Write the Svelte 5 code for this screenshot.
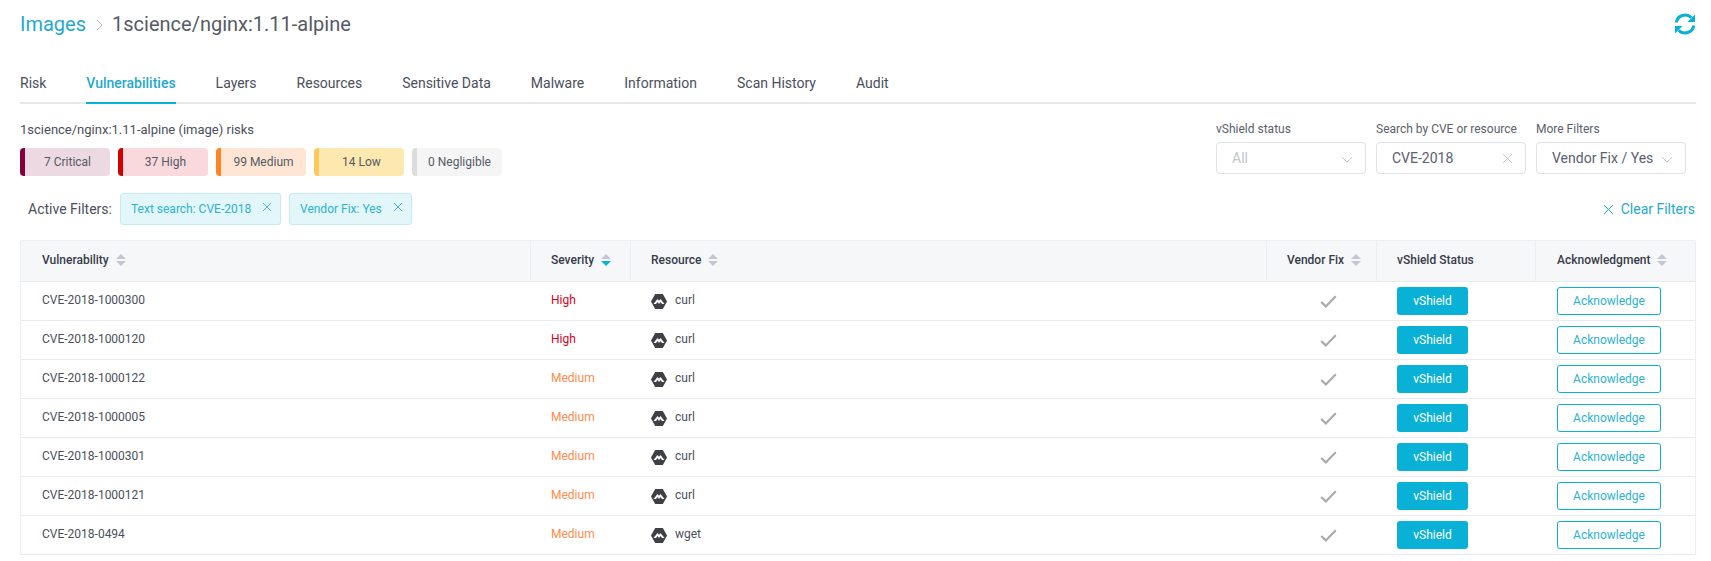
<script>
  const tabs = ['Risk','Vulnerabilities','Layers','Resources','Sensitive Data','Malware','Information','Scan History','Audit'];
  const risks = [
    {t:'7 Critical',c:'crit'},{t:'37 High',c:'high'},{t:'99 Medium',c:'med'},{t:'14 Low',c:'low'},{t:'0 Negligible',c:'neg'}
  ];
  const rows = [
    ['CVE-2018-1000300','High','curl'],
    ['CVE-2018-1000120','High','curl'],
    ['CVE-2018-1000122','Medium','curl'],
    ['CVE-2018-1000005','Medium','curl'],
    ['CVE-2018-1000301','Medium','curl'],
    ['CVE-2018-1000121','Medium','curl'],
    ['CVE-2018-0494','Medium','wget']
  ];
</script>

{#snippet sort(active)}
  <svg class="sort" width="10" height="12" viewBox="0 0 10 12"><path d="M5 0l5 5H0z" fill="#c4c7d0"/><path d="M5 12l5-5H0z" fill={active ? '#08b1d5' : '#c4c7d0'}/></svg>
{/snippet}
{#snippet x(size)}
  <svg class="x" width={size} height={size} viewBox="0 0 11 11"><path d="M1 1l9 9M10 1l-9 9" stroke="currentColor" stroke-width="1" fill="none"/></svg>
{/snippet}
{#snippet chev()}
  <svg class="chev" width="12" height="7" viewBox="0 0 12 7"><path d="M1 1l5 5 5-5" stroke="#c4c7d0" stroke-width="1" fill="none"/></svg>
{/snippet}

<div class="page">
  <header class="top">
    <div class="crumbs">
      <span class="link">Images</span>
      <svg class="sep" width="7" height="12" viewBox="0 0 7 12"><path d="M1 1l5 5-5 5" stroke="#bfc2c9" stroke-width="1" fill="none"/></svg>
      <span class="name">1science/nginx:1.11-alpine</span>
    </div>
    <svg class="refresh" width="22" height="22" viewBox="0 0 22 22" fill="none">
      <path d="M2.2 9.6A9 9 0 0 1 17.4 4.6" stroke="#08b1d5" stroke-width="3"/>
      <path d="M21 1.5v7.5h-7.5z" fill="#08b1d5"/>
      <path d="M19.8 12.4A9 9 0 0 1 4.6 17.4" stroke="#08b1d5" stroke-width="3"/>
      <path d="M1 20.5V13h7.5z" fill="#08b1d5"/>
    </svg>
  </header>

  <nav class="tabs">
    {#each tabs as t, i}
      <span class="tab" class:active={i === 1}>{t}</span>
    {/each}
  </nav>

  <section class="controls">
    <div>
      <div class="risk-title">1science/nginx:1.11-alpine (image) risks</div>
      <div class="risks">
        {#each risks as r}<span class="risk {r.c}">{r.t}</span>{/each}
      </div>
    </div>
    <div class="filters">
      <div class="field">
        <span class="lbl">vShield status</span>
        <div class="box"><span class="ph">All</span>{@render chev()}</div>
      </div>
      <div class="field">
        <span class="lbl">Search by CVE or resource</span>
        <div class="box"><span>CVE-2018</span><span class="bx">{@render x(11)}</span></div>
      </div>
      <div class="field">
        <span class="lbl">More Filters</span>
        <div class="box"><span>Vendor Fix / Yes</span>{@render chev()}</div>
      </div>
    </div>
  </section>

  <section class="active-row">
    <span class="af">Active Filters:</span>
    <span class="chip c1">Text search: CVE-2018 {@render x(10)}</span>
    <span class="chip c2">Vendor Fix: Yes {@render x(10)}</span>
    <span class="clear">{@render x(11)} Clear Filters</span>
  </section>

  <div class="table">
    <div class="row head">
      <div class="cell">Vulnerability {@render sort(false)}</div>
      <div class="cell">Severity {@render sort(true)}</div>
      <div class="cell">Resource {@render sort(false)}</div>
      <div class="cell">Vendor Fix {@render sort(false)}</div>
      <div class="cell">vShield Status</div>
      <div class="cell">Acknowledgment {@render sort(false)}</div>
    </div>
    {#each rows as r}
      <div class="row">
        <div class="cell txt">{r[0]}</div>
        <div class="cell txt" class:sev-high={r[1]==='High'} class:sev-med={r[1]==='Medium'}>{r[1]}</div>
        <div class="cell res">
          <svg width="16" height="15" viewBox="0 0 16 15"><path d="M4.2 0h7.6L16 7.5 11.8 15H4.2L0 7.5z" fill="#3f4045"/><path d="M2.5 10L6.5 5 8 6.8 9.5 5l4 5H11L9.5 8 8 10 6.5 8 5 10z" fill="#fff"/></svg>
          <span class="curl">{r[2]}</span>
        </div>
        <div class="cell check">
          <svg width="17" height="13" viewBox="0 0 17 13"><path d="M1.2 7l4.6 4.4L15.8 1.2" stroke="#aaa" stroke-width="2.2" fill="none"/></svg>
        </div>
        <div class="cell"><button class="vs">vShield</button></div>
        <div class="cell ackc"><button class="ack">Acknowledge</button></div>
      </div>
    {/each}
  </div>
</div>

<style>
  :global(body) { margin: 0; background: #fff; }
  .page { width: 1711px; height: 561px; overflow: hidden; box-sizing: border-box; padding: 0 15px 0 20px; font-family: Roboto, "Liberation Sans", sans-serif; color: #3d4452; font-size: 13px; }
  .top { display: flex; justify-content: space-between; align-items: center; height: 48px; }
  .crumbs { display: flex; align-items: center; font-size: 20px; }
  .link { color: #1fa9cf; }
  .sep { margin: 1px 9px 0 10px; }
  .name { color: #555a66; }
  .tabs { display: flex; gap: 40px; margin-top: 19px; height: 35px; border-bottom: 2px solid #e4e7ec; }
  .tab { font-size: 14px; line-height: 33px; height: 35px; color: #4a4f5c; box-sizing: border-box; }
  .tab.active { color: #1fa9cf; font-weight: 500; border-bottom: 2px solid #08b1d5; height: 37px; }
  .controls { display: flex; justify-content: space-between; padding-top: 19px; height: 69px; }
  .risk-title { font-size: 13px; line-height: 20px; margin-top: -3px; color: #4a4f5c; }
  .risks { display: flex; gap: 8px; margin-top: 8px; }
  .risk { width: 90px; height: 28px; box-sizing: border-box; border-radius: 4px; border-left: 5px solid; display: flex; align-items: center; justify-content: center; font-size: 12px; color: #555a66; }
  .crit { background: #ecd9e2; border-color: #84003c; }
  .high { background: #f9d9dc; border-color: #d40000; }
  .med { background: #ffe6d4; border-color: #ff8426; }
  .low { background: #fde8b0; border-color: #fdc95a; }
  .neg { background: #f5f5f6; border-color: #dcdcdd; }
  .filters { display: flex; gap: 10px; margin-right: 10px; }
  .field { display: flex; flex-direction: column; width: 150px; }
  .lbl { font-size: 12px; line-height: 16px; margin-top: -2px; margin-bottom: 5px; color: #5a5f6b; white-space: nowrap; }
  .box { height: 32px; box-sizing: border-box; border: 1px solid #dfe1e6; border-radius: 4px; display: flex; align-items: center; justify-content: space-between; padding: 0 12px 0 15px; font-size: 14px; color: #5a6070; }
  .ph { color: #c2c5cc; }
  .bx { color: #c4c7d0; display: flex; }
  .chev { margin-top: 3px; }
  .active-row { display: flex; align-items: center; height: 32px; margin-top: 1px; }
  .af { margin-left: 8px; font-size: 14px; width: 92px; color: #4a4f5c; }
  .chip { display: flex; align-items: center; justify-content: space-between; height: 32px; box-sizing: border-box; padding: 0 8px 0 10px; background: #e3f6fa; border: 1px solid #c5ebf3; border-radius: 3px; color: #2db2d0; font-size: 12px; margin-right: 8px; }
  .chip .x { margin-top: -4px; }
  .c1 { width: 161px; }
  .c2 { width: 123px; }
  .clear { margin-left: auto; margin-right: 1px; color: #1fa9cf; font-size: 14px; display: flex; align-items: center; gap: 7px; white-space: nowrap; }
  .table { margin-top: 15px; width: 1676px; border: 1px solid #eceef2; border-bottom: 0; border-radius: 2px 2px 0 0; box-sizing: border-box; font-size: 12px; }
  .row { display: grid; grid-template-columns: 509px 100px 636px 110px 159px 160px; height: 39px; border-bottom: 1px solid #e9ebf1; box-sizing: border-box; align-items: center; }
  .row.head { height: 41px; background: #f6f7f9; border-bottom: 1px solid #e8eaef; align-items: stretch; font-weight: 500; }
  .row.head .cell { border-left: 1px solid #eceef2; padding-left: 20px; padding-bottom: 3px; color: #363c48; gap: 7px; }
  .row.head .cell:first-child { border-left: 0; padding-left: 21px; }
  .row.head .cell:last-child { padding-left: 21px; }
  .cell { padding-left: 21px; display: flex; align-items: center; white-space: nowrap; gap: 5px; color: #4a4f5c; }
  .txt { padding-bottom: 2px; }
  .curl { padding-bottom: 2px; }
  .ackc { padding-left: 22px; }
  .sev-high { color: #d9001b; }
  .sev-med { color: #ff8a4c; }
  .res { gap: 8px; }
  .check { padding-left: 54px; }
  button { font-family: inherit; font-size: 12px; height: 28px; border-radius: 3px; box-sizing: border-box; padding: 0; cursor: pointer; }
  .vs { width: 71px; background: #08b1d5; border: 0; color: #fff; font-weight: 400; }
  .ack { width: 104px; background: #fff; border: 1px solid #08b1d5; color: #2db2d0; }
</style>
